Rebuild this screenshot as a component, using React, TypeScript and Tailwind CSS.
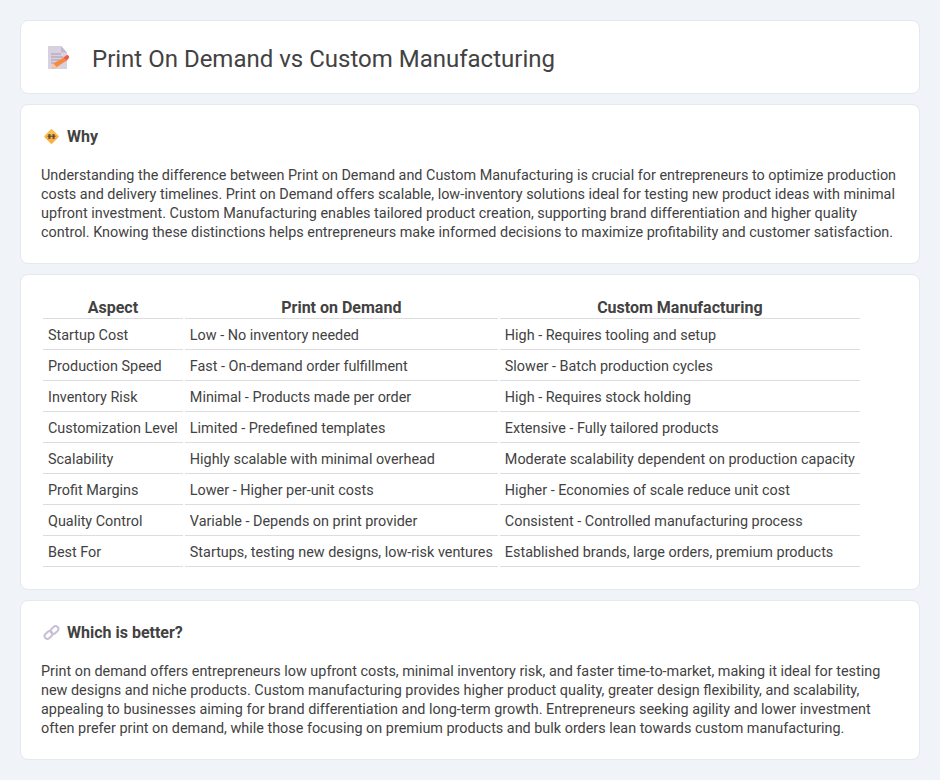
const rows = [
  ["Startup Cost", "Low - No inventory needed", "High - Requires tooling and setup"],
  ["Production Speed", "Fast - On-demand order fulfillment", "Slower - Batch production cycles"],
  ["Inventory Risk", "Minimal - Products made per order", "High - Requires stock holding"],
  ["Customization Level", "Limited - Predefined templates", "Extensive - Fully tailored products"],
  ["Scalability", "Highly scalable with minimal overhead", "Moderate scalability dependent on production capacity"],
  ["Profit Margins", "Lower - Higher per-unit costs", "Higher - Economies of scale reduce unit cost"],
  ["Quality Control", "Variable - Depends on print provider", "Consistent - Controlled manufacturing process"],
  ["Best For", "Startups, testing new designs, low-risk ventures", "Established brands, large orders, premium products"],
];

function DocIcon() {
  return (
    <svg width="24" height="24" viewBox="0 0 24 24" className="mt-[1px] shrink-0">
      <path d="M1 0H14L20 6.5V23H1Z" fill="#d9d0e0" />
      <path d="M14 0L20 6.5H14Z" fill="#c4b8cc" />
      <path d="M4 8H14M4 11H16M4 14H13M4 17H9" stroke="#a79cb0" strokeWidth="1" />
      <path d="M6.5 17.5L17.5 11L20.5 14L9 21.5L5 23Z" fill="#f58a3c" />
      <path d="M16.5 11.5L19.5 9.2C20 8.8 20.6 8.8 21 9.2L22 10.5C22.4 11 22.3 11.6 21.9 12L19.8 14.5Z" fill="#f0584c" />
      <path d="M6.5 17.5L9.5 21L5 23Z" fill="#f7c9a0" />
    </svg>
  );
}

function DiamondIcon() {
  return (
    <svg width="17" height="17" viewBox="0 0 17 17" className="shrink-0">
      <rect x="3" y="3" width="11" height="11" rx="1.5" transform="rotate(45 8.5 8.5)" fill="#fbb03f" />
      <path d="M8.5 1.5L15.5 8.5H1.5Z" fill="#fdc94f" opacity="0.6" />
      <path d="M6 6V11M6.9 6V11M10.1 6V11M11 6V11M4.5 8.2H12.5" stroke="#4b4048" strokeWidth="1" />
    </svg>
  );
}

function LinkIcon() {
  return (
    <svg width="17" height="17" viewBox="0 0 17 17" className="shrink-0">
      <g fill="none" stroke="#c9bfd6" strokeWidth="2">
        <rect x="1.2" y="8.2" width="8.6" height="5.6" rx="2.8" transform="rotate(-45 5.5 11)" />
        <rect x="7.2" y="3.2" width="8.6" height="5.6" rx="2.8" transform="rotate(-45 11.5 6)" />
      </g>
    </svg>
  );
}

export default function App() {
  return (
    <div className="min-h-[780px] bg-[#f0f3f8] px-5 pt-5 pb-5 font-['Roboto',sans-serif] text-[#424242]">
      <div className="flex flex-col gap-2.5">
        <header className="flex h-[74px] items-center rounded-lg border border-[#e4e8f0] bg-white pl-[26px]">
          <DocIcon />
          <h1 className="mt-1 ml-[21px] text-2xl leading-none font-normal text-[#424242]">Print On Demand vs Custom Manufacturing</h1>
        </header>

        <section className="h-[160px] rounded-lg border border-[#e4e8f0] bg-white px-5 pt-[21px]">
          <div className="flex items-center gap-[7px] pl-[2px]">
            <DiamondIcon />
            <h2 className="mt-[1px] text-base leading-5 font-bold text-[#424242]">Why</h2>
          </div>
          <p className="mt-[19px] text-[14.4px] leading-[19px] text-[#424242]">
            Understanding the difference between Print on Demand and Custom Manufacturing is crucial for entrepreneurs to optimize production costs and delivery timelines. Print on Demand offers scalable, low-inventory solutions ideal for testing new product ideas with minimal upfront investment. Custom Manufacturing enables tailored product creation, supporting brand differentiation and higher quality control. Knowing these distinctions helps entrepreneurs make informed decisions to maximize profitability and customer satisfaction.
          </p>
        </section>

        <section className="h-[316px] rounded-lg border border-[#e4e8f0] bg-white px-5 pt-5">
          <table className="border-separate border-spacing-[2px] text-[14.4px]">
            <thead>
              <tr>
                <th className="border-b border-[#dddddd] px-[5px] pt-0 pb-0 text-center text-base leading-[21px] font-bold">Aspect</th>
                <th className="border-b border-[#dddddd] px-[5px] pt-0 pb-0 text-center text-base leading-[21px] font-bold">Print on Demand</th>
                <th className="border-b border-[#dddddd] px-[5px] pt-0 pb-0 text-center text-base leading-[21px] font-bold">Custom Manufacturing</th>
              </tr>
            </thead>
            <tbody>
              {rows.map((r) => (
                <tr key={r[0]}>
                  {r.map((c) => (
                    <td key={c} className="h-[29px] border-b border-[#dddddd] px-[5px] align-middle leading-[19px] whitespace-nowrap">{c}</td>
                  ))}
                </tr>
              ))}
            </tbody>
          </table>
        </section>

        <section className="h-[160px] rounded-lg border border-[#e4e8f0] bg-white px-5 pt-[21px]">
          <div className="flex items-center gap-[7px] pl-[2px]">
            <LinkIcon />
            <h2 className="mt-[1px] text-base leading-5 font-bold text-[#424242]">Which is better?</h2>
          </div>
          <p className="mt-[19px] text-[14.4px] leading-[19px] text-[#424242]">
            Print on demand offers entrepreneurs low upfront costs, minimal inventory risk, and faster time-to-market, making it ideal for testing new designs and niche products. Custom manufacturing provides higher product quality, greater design flexibility, and scalability, appealing to businesses aiming for brand differentiation and long-term growth. Entrepreneurs seeking agility and lower investment often prefer print on demand, while those focusing on premium products and bulk orders lean towards custom manufacturing.
          </p>
        </section>
      </div>
    </div>
  );
}
